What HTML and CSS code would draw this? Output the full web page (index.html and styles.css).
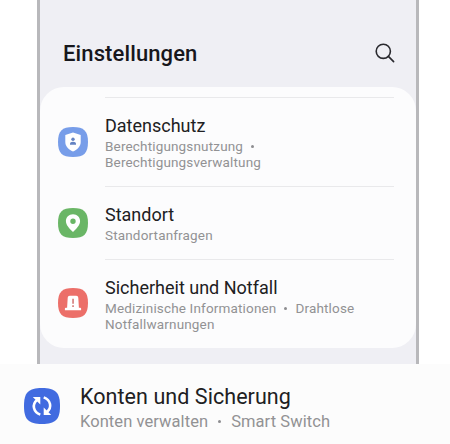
FILE: index.html
```html
<!DOCTYPE html>
<html lang="de">
<head>
<meta charset="utf-8">
<title>Einstellungen</title>
<link rel="stylesheet" href="styles.css">
</head>
<body>
<main class="page">
  <section class="phone">
    <header class="header">
      <h1 class="title">Einstellungen</h1>
      <svg class="search" viewBox="0 0 20 20" fill="none" stroke="#29292e" stroke-width="1.6" stroke-linecap="round"><circle cx="8.3" cy="8.3" r="7.1"/><path d="M13.4 13.4 18.6 18.6"/></svg>
    </header>
    <div class="card">
      <div class="item item-privacy">
        <svg class="icon" viewBox="0 0 30 30"><path fill="#779de9" d="M15 0C26 0 30 4 30 15S26 30 15 30 0 26 0 15 4 0 15 0Z"/><path fill="#fff" d="M15 5.500 22.700 8V15c0 4.300-3 7.500-7.700 9.500C10.300 22.500 7.300 19.300 7.300 15V8Z"/><circle cx="15" cy="12.200" r="1.700" fill="#6483c2"/><path fill="#6483c2" d="M12 17.800v-1.100c0-1.300 1.100-2 3-2s3 .7 3 2v1.100Z"/></svg>
        <div class="text">
          <h2 class="name">Datenschutz</h2>
          <p class="sub"><span>Berechtigungsnutzung</span><i class="dot"></i><br><span>Berechtigungsverwaltung</span></p>
        </div>
      </div>
      <div class="item item-location">
        <svg class="icon" viewBox="0 0 30 30"><path fill="#6ab666" d="M15 0C26 0 30 4 30 15S26 30 15 30 0 26 0 15 4 0 15 0Z"/><path fill="#fff" fill-rule="evenodd" d="M15 6.200c4.200 0 7.100 3 7.100 6.900 0 4.300-3.700 7.700-7.100 10.900-3.400-3.200-7.100-6.600-7.100-10.900 0-3.900 2.900-6.900 7.100-6.900Zm0 4.300a2.700 2.700 0 1 0 0 5.400 2.700 2.700 0 0 0 0-5.400Z"/></svg>
        <div class="text">
          <h2 class="name">Standort</h2>
          <p class="sub"><span>Standortanfragen</span></p>
        </div>
      </div>
      <div class="item item-safety">
        <svg class="icon" viewBox="0 0 30 30"><path fill="#ec6f69" d="M15 0C26 0 30 4 30 15S26 30 15 30 0 26 0 15 4 0 15 0Z"/><path fill="#fff" d="M9.100 19.700 9.700 10c.1-1.500.8-2.200 2.200-2.200h6.200c1.400 0 2.100.7 2.200 2.200l.6 9.700h1.300c.6 0 .9.400.9.900v1.600H6.900v-1.600c0-.5.300-.9.900-.9Z"/><path fill="#d0716f" d="M14.300 10.800h1.500v4.900h-1.500ZM14.300 17.200h1.500v1.700h-1.500Z"/></svg>
        <div class="text">
          <h2 class="name">Sicherheit und Notfall</h2>
          <p class="sub"><span>Medizinische Informationen</span><i class="dot"></i><span>Drahtlose</span><br><span>Notfallwarnungen</span></p>
        </div>
      </div>
    </div>
  </section>
  <section class="callout">
    <svg class="icon-large" viewBox="0 0 36 36"><path fill="#416be0" d="M18 0C31.500 0 36 4.500 36 18S31.500 36 18 36 0 31.500 0 18 4.500 0 18 0Z"/><g fill="none" stroke="#fff" stroke-width="2.600"><path d="M16.300 26.600C9.300 24 7.500 16.500 13.300 11.800"/><path d="M19.700 9.400C26.700 12 28.500 19.500 22.700 24.200"/></g><path fill="#fff" d="M8.800 9.100H16.300V16.600ZM27.200 26.900H19.700V19.400Z"/></svg>
    <div class="text">
      <h2 class="name">Konten und Sicherung</h2>
      <p class="sub"><span>Konten verwalten</span><i class="dot"></i><span>Smart Switch</span></p>
    </div>
  </section>
</main>
</body>
</html>
```
FILE: styles.css
```css
* { box-sizing: border-box; }
body { margin: 0; background: #fff; font-family: Roboto, sans-serif; }
h1, h2, p { margin: 0; font-weight: 400; white-space: nowrap; }
svg { display: block; flex: none; }
.page { width: 450px; height: 444px; overflow: hidden; }
.phone {
  width: 382px;
  height: 364px;
  margin-left: 37px;
  border: solid #b8b8bb;
  border-width: 0 3px;
  background: #efeff4;
}
.header {
  height: 87px;
  padding: 19px 21px 0 23px;
  display: flex;
  align-items: center;
  justify-content: space-between;
}
.title { margin-top: 2px; font-size: 22px; font-weight: 500; line-height: 28px; letter-spacing: 0.12px; color: #17171c; }
.search { width: 20px; height: 20px; }
.card {
  height: 261px;
  padding-top: 10px;
  border-radius: 24px;
  background: #fcfcfd;
}
.item { display: flex; align-items: center; padding-left: 18px; }
.icon { width: 30px; height: 30px; margin-right: 17px; }
.item .text { width: 289px; align-self: stretch; border-top: 1px solid #e9e9eb; }
.item-privacy { height: 89px; }
.item-location { height: 73px; }
.item-safety { height: 89px; }
.item-safety .icon { margin-top: -2px; }
.name { font-size: 18px; line-height: 22px; color: #202022; }
.item .name { margin-top: 17px; }
.sub { font-size: 13.5px; line-height: 16px; letter-spacing: 0.16px; color: #929294; }
.item .sub { margin-top: 1px; }
.dot {
  display: inline-block;
  width: 3px;
  height: 3px;
  margin: 0 8px;
  border-radius: 50%;
  background: #8d8d90;
  vertical-align: 3px;
}
.callout {
  height: 80px;
  padding: 0 0 0 24px;
  display: flex;
  align-items: flex-start;
  background: #fcfcfc;
}
.icon-large { width: 36px; height: 36px; margin: 24px 20px 0 0; }
.callout .name { margin-top: 20px; font-size: 21.5px; line-height: 26px; letter-spacing: 0.06px; }
.callout .sub { margin-top: 2px; font-size: 16.5px; line-height: 20px; letter-spacing: 0.07px; }
.callout .dot { margin: 0 10px; vertical-align: 4px; }
```
